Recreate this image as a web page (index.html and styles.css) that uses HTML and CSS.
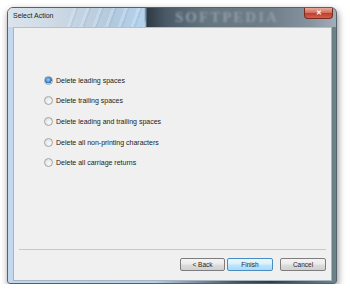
FILE: index.html
```html
<!DOCTYPE html>
<html lang="en">
<head>
  <meta charset="UTF-8" />
  <title>Select Action</title>
  <link rel="stylesheet" href="styles.css">
</head>
<body>
  <div class="window">
    <div class="titlebar">
      <span class="title">Select Action</span>
      <span class="watermark">SOFTPEDIA</span>
      <div class="close">&#x2715;</div>
    </div>
    <div class="client">
      <div class="options">
        <label class="option"><span class="radio checked"></span>Delete leading spaces</label>
        <label class="option"><span class="radio"></span>Delete trailing spaces</label>
        <label class="option"><span class="radio"></span>Delete leading and trailing spaces</label>
        <label class="option"><span class="radio"></span>Delete all non-printing characters</label>
        <label class="option"><span class="radio"></span>Delete all carriage returns</label>
      </div>
      <div class="footer">
        <div class="buttons">
          <button class="btn back">&lt; Back</button>
          <button class="btn default">Finish</button>
          <button class="btn cancel">Cancel</button>
        </div>
      </div>
    </div>
  </div>
</body>
</html>
```

FILE: styles.css
```css
body {
  margin: 0;
  padding: 0;
  background: #ffffff;
  font-family: "Liberation Sans", Arial, sans-serif;
}

.window {
  box-sizing: border-box;
  margin: 7px 0 0 7px;
  width: 330px;
  height: 277px;
  display: flex;
  flex-direction: column;
  border: 1px solid #55626c;
  border-radius: 6px 6px 3px 3px;
  background: linear-gradient(to right, #c3d8ee 0%, #b7cee6 45%, #44525e 70%, #2f3c47 80%, #6d8489 100%);
  box-shadow: 1px 3px 7px rgba(0, 0, 0, 0.45);
  overflow: hidden;
}

.titlebar {
  position: relative;
  height: 19px;
  display: flex;
  align-items: flex-start;
  background:
    repeating-linear-gradient(110deg, rgba(255, 255, 255, 0) 0 7px, rgba(225, 236, 248, 0.35) 7px 10px, rgba(120, 150, 180, 0.15) 10px 12px) 58px 0 / 80px 100% no-repeat,
    linear-gradient(to right, #dbe4ec 0%, #cbd8e4 16%, #b2c9dd 32%, #b4d2ee 41.5%, #2e3b46 42.5%, #4a5966 48%, #65757f 60%, #6f7e89 80%, #8594a0 92%, #a2aeb8 100%);
}

.title {
  margin: 4px 0 0 5px;
  font-size: 7px;
  color: #1c1c1c;
}

.watermark {
  position: absolute;
  left: 167px;
  top: 1px;
  font-family: "Liberation Serif", serif;
  font-weight: bold;
  font-size: 15px;
  letter-spacing: 2px;
  color: #8e9ca9;
  filter: blur(0.9px);
}

.close {
  margin: 0 3px 0 auto;
  width: 29px;
  height: 11px;
  box-sizing: border-box;
  border: 1px solid #7a2a1e;
  border-top: none;
  border-radius: 0 0 4px 4px;
  background: linear-gradient(#e9a898 0%, #d27262 45%, #c0402d 55%, #d0604a 100%);
  color: #ffffff;
  font-size: 7px;
  font-weight: bold;
  line-height: 10px;
  text-align: center;
}

.client {
  flex: 1;
  margin: 0 4px 2px 5px;
  background: #f0f0f0;
  display: flex;
  flex-direction: column;
  border: 1px solid #a5b5c4;
  border-top-color: #b4c1cc;
}

.options {
  flex: 1;
  display: flex;
  flex-direction: column;
  padding: 42px 0 0 30px;
}

.option {
  height: 20.6px;
  display: flex;
  align-items: center;
  font-size: 7px;
  color: #222222;
}

.radio {
  box-sizing: border-box;
  width: 9px;
  height: 9px;
  margin-right: 3px;
  border-radius: 50%;
  border: 1px solid #a2a5a8;
  background: radial-gradient(circle at 60% 65%, #fafafa 0%, #e6e6e6 60%, #d6d7d7 100%);
}

.radio.checked {
  background:
    radial-gradient(circle at 45% 40%, #9ed6f7 0%, #3d8ad0 45%, #1d5a9a 62%, rgba(0, 0, 0, 0) 66%),
    radial-gradient(#f4f4f4, #d6d6d6);
}

.footer {
  margin: 0 5px;
  border-top: 1px solid #c8c8c8;
  padding: 8px 0 9px;
}

.buttons {
  display: flex;
  justify-content: flex-end;
}

.btn {
  box-sizing: border-box;
  width: 46px;
  height: 13px;
  padding: 0;
  border: 1px solid #7d7d7d;
  border-radius: 2px;
  background: linear-gradient(#f4f4f4 0%, #ebebeb 48%, #dddddd 52%, #d0d0d0 100%);
  font-family: "Liberation Sans", Arial, sans-serif;
  font-size: 6.5px;
  color: #1e1e1e;
}

.back {
  width: 45px;
}

.btn.default {
  margin-left: 2px;
  border-color: #4a8cc2;
  background: linear-gradient(#eaf6fd 0%, #d9f0fc 48%, #bee6fd 52%, #a9dbf6 100%);
}

.cancel {
  margin-left: 7px;
}
```
